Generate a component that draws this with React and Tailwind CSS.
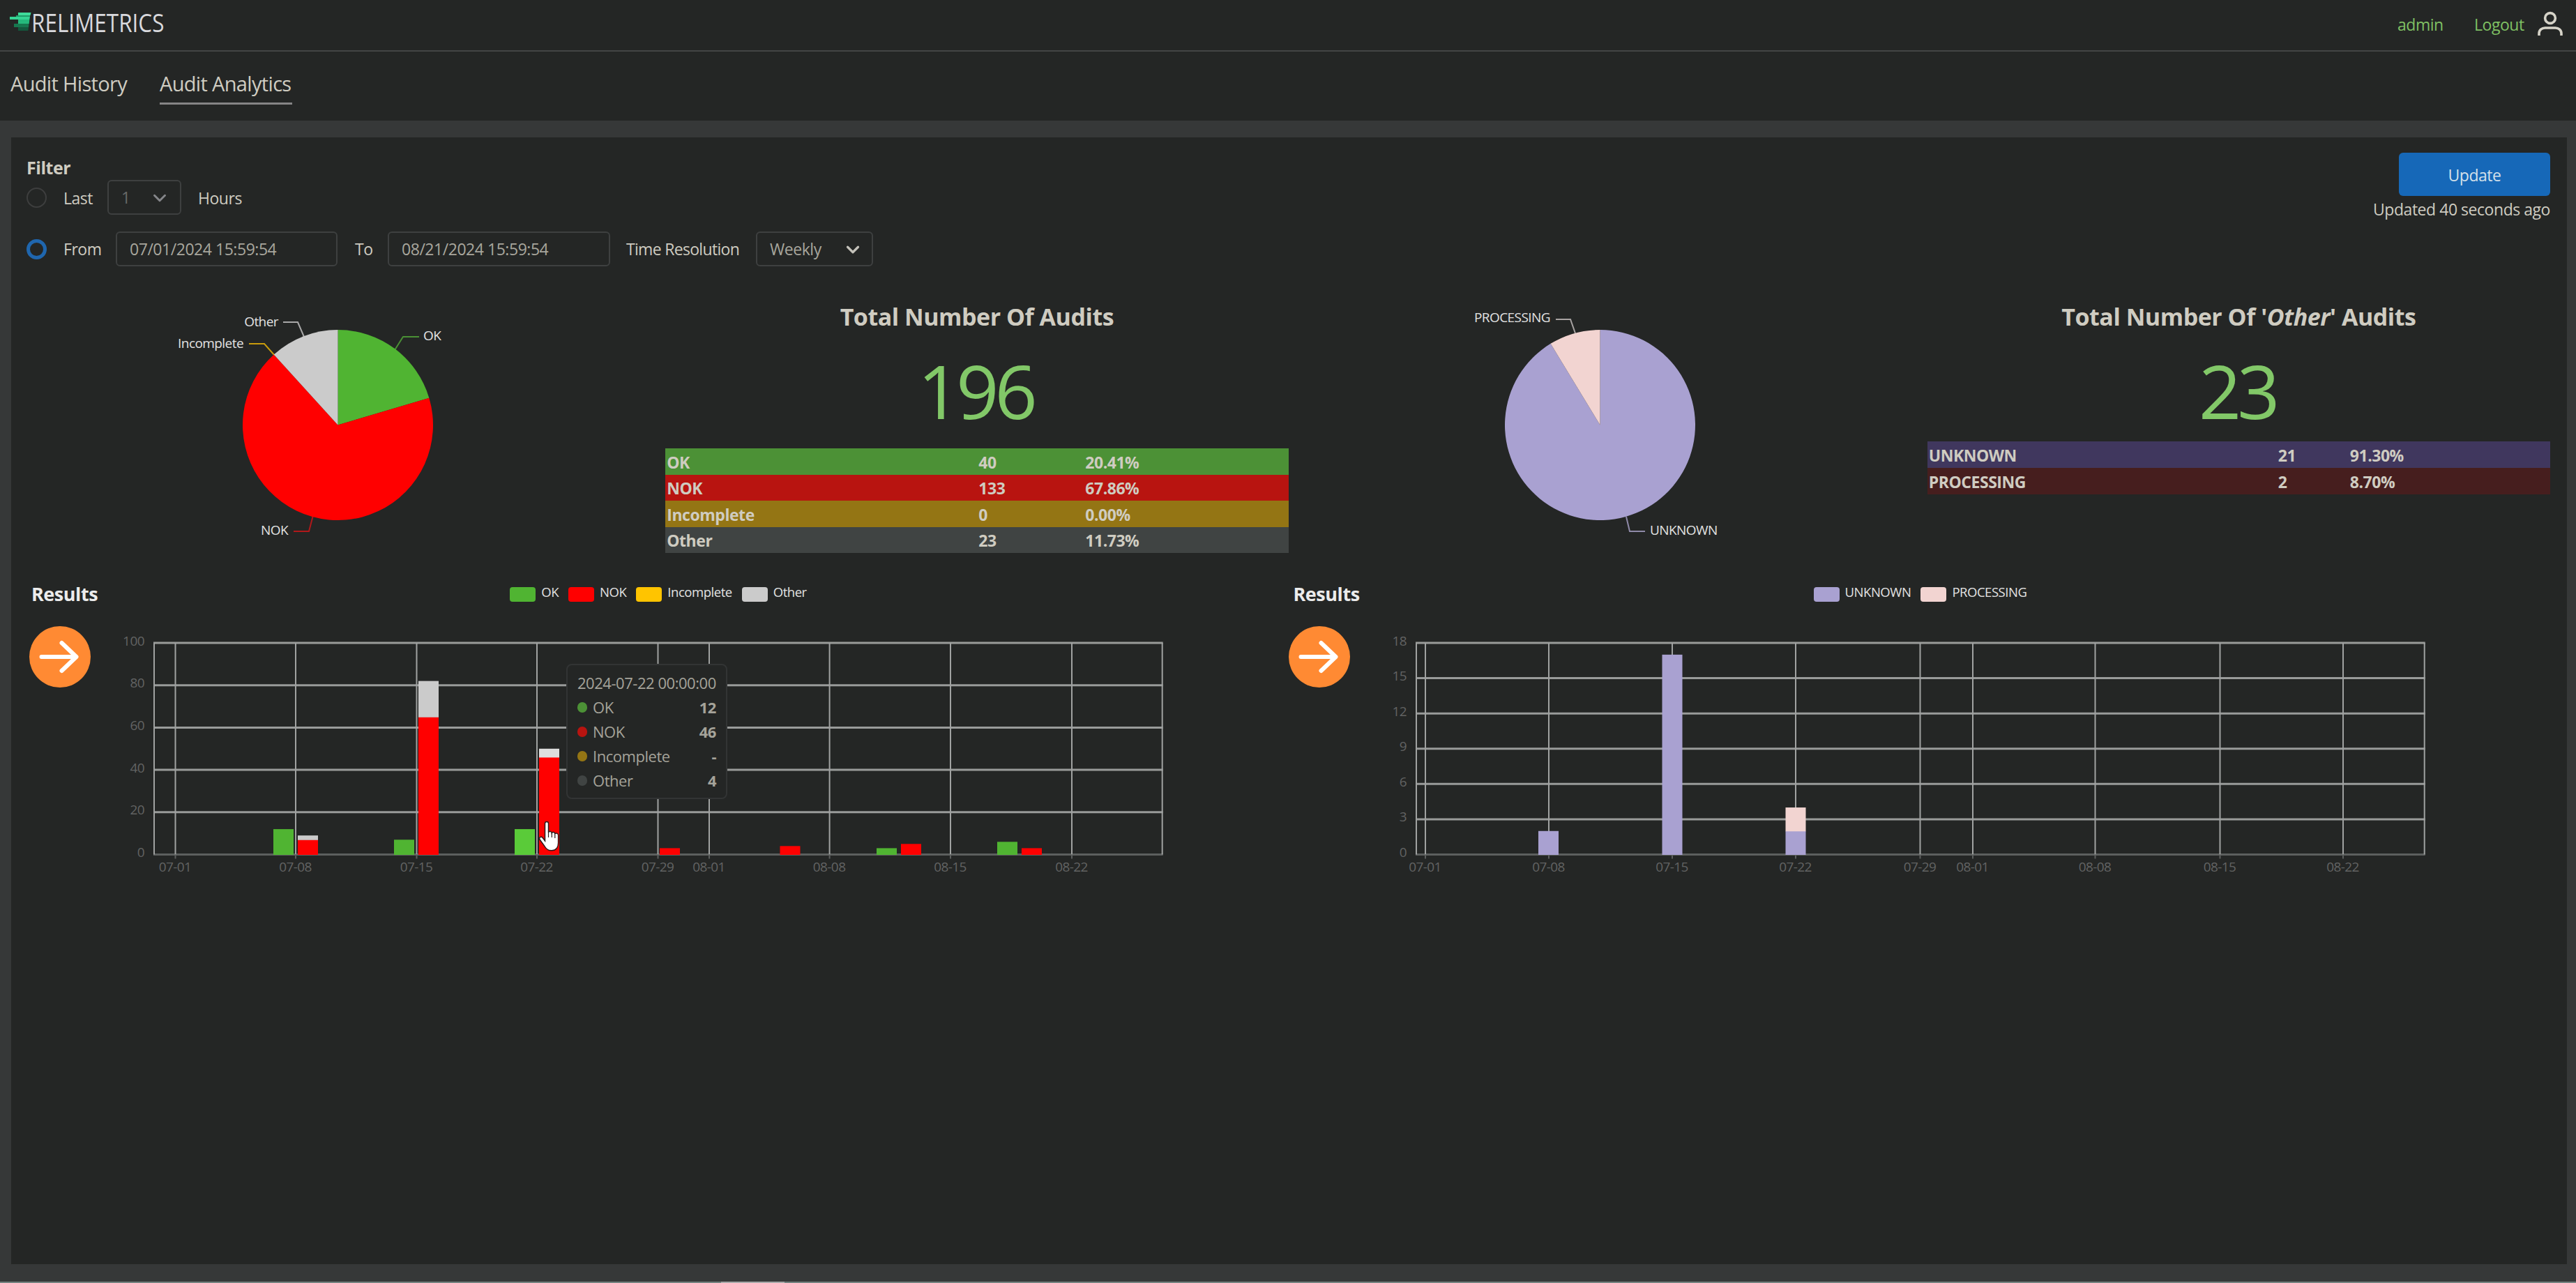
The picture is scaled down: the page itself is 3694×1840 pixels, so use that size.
import { ChevronDown } from 'lucide-react';

const auditPie = {
  slices: [
    { value: 40, color: '#50b432' },
    { value: 133, color: '#ff0000' },
    { value: 0, color: '#ffc400' },
    { value: 23, color: '#cbcbcb' },
  ],
  labels: [
    { text: 'OK', x: 569, y: 58, anchor: 'start', color: '#4a8f35', points: '528,72 540,53 563,53' },
    { text: 'Other', x: 361, y: 37.5, anchor: 'end', color: '#a8a8a8', points: '368,32 389,32 398,53' },
    { text: 'Incomplete', x: 311, y: 68.5, anchor: 'end', color: '#c99c0c', points: '319,63 341,63 356,80' },
    { text: 'NOK', x: 375, y: 337, anchor: 'end', color: '#b0181a', points: '383,332 405,332 411,309' },
  ],
};

const otherPie = {
  slices: [
    { value: 21, color: '#a9a1d1' },
    { value: 2, color: '#f2d4d1' },
  ],
  labels: [
    { text: 'PROCESSING', x: 375, y: 31.5, anchor: 'end', color: '#a8a3a2', points: '383,28 404,28 411,48' },
    { text: 'UNKNOWN', x: 518, y: 337, anchor: 'start', color: '#8f8aa8', points: '484,311 489,332 511,332' },
  ],
};

const auditRows = [
  { label: 'OK', count: 40, share: '20.41%', cls: 'h-[38px] bg-[#4c9136]' },
  { label: 'NOK', count: 133, share: '67.86%', cls: 'h-[37px] bg-[#b81410]' },
  { label: 'Incomplete', count: 0, share: '0.00%', cls: 'h-[38px] bg-[#947514]' },
  { label: 'Other', count: 23, share: '11.73%', cls: 'h-[37px] bg-[#404443]' },
];

const otherRows = [
  { label: 'UNKNOWN', count: 21, share: '91.30%', cls: 'h-[38px] bg-[#40375e]' },
  { label: 'PROCESSING', count: 2, share: '8.70%', cls: 'h-[38px] bg-[#461e1e]' },
];

const auditLegend = [
  { label: 'OK', cls: 'bg-[#50b432]' },
  { label: 'NOK', cls: 'bg-[#ff0000]' },
  { label: 'Incomplete', cls: 'bg-[#ffc400]' },
  { label: 'Other', cls: 'bg-[#cbcbcb]' },
];

const otherLegend = [
  { label: 'UNKNOWN', cls: 'bg-[#a9a1d1]' },
  { label: 'PROCESSING', cls: 'bg-[#f2d4d1]' },
];

// x is the left edge of the bar, stack goes bottom to top
const auditChart = {
  max: 100,
  step: 20,
  ticks: [
    ['07-01', 213.5], ['07-08', 386], ['07-15', 559.5], ['07-22', 732], ['07-29', 905.5],
    ['08-01', 979], ['08-08', 1151.6], ['08-15', 1325], ['08-22', 1499],
  ],
  bars: [
    { x: 354, stack: [[12, '#50b432']] },
    { x: 389, stack: [[7, '#ff0000'], [2, '#cbcbcb']] },
    { x: 527, stack: [[7, '#50b432']] },
    { x: 562, stack: [[65, '#ff0000'], [17, '#cbcbcb']] },
    { x: 700, stack: [[12, '#5acb39']] },
    { x: 735, stack: [[46, '#ff0000'], [4, '#dedede']] },
    { x: 908, stack: [[3, '#ff0000']] },
    { x: 1080.5, stack: [[4, '#ff0000']] },
    { x: 1219, stack: [[3, '#50b432']] },
    { x: 1254, stack: [[5, '#ff0000']] },
    { x: 1392, stack: [[6, '#50b432']] },
    { x: 1427, stack: [[3, '#ff0000']] },
  ],
};

const otherChart = {
  max: 18,
  step: 3,
  ticks: [
    ['07-01', 196], ['07-08', 373], ['07-15', 550], ['07-22', 727], ['07-29', 905.5],
    ['08-01', 981], ['08-08', 1156.5], ['08-15', 1335.5], ['08-22', 1512],
  ],
  bars: [
    { x: 358, stack: [[2, '#a9a1d1']] },
    { x: 535.5, stack: [[17, '#a9a1d1']] },
    { x: 712.5, stack: [[2, '#a9a1d1'], [2, '#f2d4d1']] },
  ],
};

const tooltipRows = [
  { label: 'OK', value: '12', cls: 'bg-[#4c9136]' },
  { label: 'NOK', value: '46', cls: 'bg-[#b81410]' },
  { label: 'Incomplete', value: '-', cls: 'bg-[#947514]' },
  { label: 'Other', value: '4', cls: 'bg-[#404443]' },
];

const Logo = () => (
  <div className="flex items-start">
    <svg width="31" height="46" viewBox="0 -14 31 46" className="shrink-0">
      <path d="M12 4h18.500l-1 4H12z" fill="#3fdc9b" />
      <path d="M0 10h29l-.7 4H0z" fill="#35d493" />
      <path d="M9 8h20.300l-.4 2H9z" fill="#1f9c69" />
      <path d="M12 14h16.300l-.6 6H12z" fill="#25b97c" />
      <path d="M6 20h21.500l-.5 5H6z" fill="#17774f" />
      <path d="M12 25h15l-.6 5H12z" fill="#13583d" />
    </svg>
    <span className="origin-left scale-x-[0.85] pt-1.5 text-[37px] leading-[52px] tracking-normal text-[#d9d9dd]">
      RELIMETRICS
    </span>
  </div>
);

const UserIcon = () => (
  <svg width="40" height="40" viewBox="0 0 40 40" fill="none" stroke="#d6d3c8" strokeWidth="3.6">
    <circle cx="20" cy="12" r="7.4" />
    <path d="M4 37v-3c0-5 4-8 8.500-8h15c4.500 0 8.500 3 8.500 8v3" />
  </svg>
);

const Header = () => (
  <header className="flex h-[74px] items-start justify-between border-b-2 border-[#434545] pl-3.5 pr-[17px]">
    <Logo />
    <div className="flex items-start pt-3.5 text-[#7fc063]">
      <span className="w-[110px] leading-[42px]">admin</span>
      <span className="w-[89px] leading-[42px]">Logout</span>
      <UserIcon />
    </div>
  </header>
);

const Tabs = () => (
  <nav className="flex h-[99px] items-start gap-[46px] pl-[15px] pt-6 text-[29px] leading-[44px] tracking-[-0.023em]">
    <a className="w-[168px] whitespace-nowrap">Audit History</a>
    <a className="w-[190px] whitespace-nowrap border-b-3 border-[#858585] pb-[5px]">Audit Analytics</a>
  </nav>
);

const Field = ({ className, children }) => (
  <div className={`flex h-[50px] items-center rounded-md border-2 border-[#3e4040] ${className}`}>
    {children}
  </div>
);

const Filter = () => (
  <div className="flex items-start justify-between">
    <div className="pt-[3px]">
      <h2 className="text-[25px] font-bold leading-[36px]">Filter</h2>
      <div className="flex items-center">
        <span className="mr-6 h-[29px] w-[29px] rounded-full border-2 border-[#3d3e3e]" />
        <span className="w-[63px] pt-0.5">Last</span>
        <Field className="w-[106px] justify-between pl-[18px] pr-3.5 pt-px text-[#6a6b69]">
          1
          <ChevronDown size={30} strokeWidth={2.4} color="#85868a" />
        </Field>
        <span className="ml-6 pt-0.5">Hours</span>
      </div>
      <div className="mt-6 flex items-center">
        <span className="mr-6 h-[29px] w-[29px] rounded-full border-[5px] border-[#1f66ae]" />
        <span className="w-[75px] pt-px">From</span>
        <Field className="w-[318px] pl-[18px] pt-px text-[#a8a69d]">07/01/2024 15:59:54</Field>
        <span className="ml-[25px] w-[47px] pt-px">To</span>
        <Field className="w-[319px] pl-[18px] pt-px text-[#a8a69d]">08/21/2024 15:59:54</Field>
        <span className="ml-[23px] w-[186px] pt-px tracking-[-0.03em]">Time Resolution</span>
        <Field className="w-[168px] justify-between pl-[18px] pr-3 pt-px text-[#a8a69d]">
          Weekly
          <ChevronDown size={30} strokeWidth={2.6} color="#c4c2ba" />
        </Field>
      </div>
    </div>
    <div className="flex flex-col items-end">
      <button type="button" className="h-[62px] w-[217px] rounded-md bg-[#1668b8] pt-0.5 text-[#d3e0ea]">
        Update
      </button>
      <p className="mt-0.5 leading-[34px]">Updated 40 seconds ago</p>
    </div>
  </div>
);

const R = 136.5;
const CX = 446.5;
const CY = 179.5;

const Pie = ({ slices, labels }) => {
  const total = slices.reduce((sum, s) => sum + s.value, 0);
  let start = 0;
  const paths = slices.map((s) => {
    const end = start + (s.value / total) * Math.PI * 2;
    const large = end - start > Math.PI ? 1 : 0;
    const d = `M${CX} ${CY}L${CX + R * Math.sin(start)} ${CY - R * Math.cos(start)}A${R} ${R} 0 ${large} 1 ${CX + R * Math.sin(end)} ${CY - R * Math.cos(end)}Z`;
    start = end;
    return { d, color: s.color };
  });

  return (
    <svg width="893" height="400" viewBox="0 0 893 400">
      {labels.map((l) => (
        <polyline key={l.text} points={l.points} fill="none" stroke={l.color} strokeWidth="2" />
      ))}
      {paths.map((p) => (
        <path key={p.color} d={p.d} fill={p.color} />
      ))}
      {labels.map((l) => (
        <text
          key={l.text}
          x={l.x}
          y={l.y}
          textAnchor={l.anchor}
          className="fill-[#e2e2e2] text-[19px] font-medium tracking-[-0.03em]"
        >
          {l.text}
        </text>
      ))}
    </svg>
  );
};

const Totals = ({ title, total, rows, tableCls, rowCls }) => (
  <div className="pt-0.5">
    <h3 className="text-center text-[34px] font-bold leading-[44px] tracking-[-0.014em]">{title}</h3>
    <p className="mt-6 pr-1 text-center text-[107px] leading-[120px] tracking-[-0.055em] text-[#82c868]">{total}</p>
    <div className={tableCls}>
      {rows.map((r) => (
        <div key={r.label} className={`grid items-center pl-0.5 pt-px font-bold leading-[34px] tracking-[-0.02em] ${rowCls} ${r.cls}`}>
          <span>{r.label}</span>
          <span>{r.count}</span>
          <span>{r.share}</span>
        </div>
      ))}
    </div>
  </div>
);

const LEFT = 183;
const RIGHT = 1628.7;
const TOP = 50;
const BASE = 353.5;

const BarChart = ({ max, step, ticks, bars }) => {
  const unit = (BASE - TOP) / max;
  const levels = [];
  for (let v = 0; v <= max; v += step) levels.push(v);

  return (
    <svg width="1809" height="400" viewBox="0 0 1809 400">
      {levels.map((v) => (
        <g key={v}>
          <line
            x1={LEFT - 1}
            x2={RIGHT + 1}
            y1={BASE - v * unit}
            y2={BASE - v * unit}
            stroke={v === 0 ? '#5c5f5e' : '#999b9a'}
            strokeWidth="3"
          />
          <text
            x="169"
            y={BASE - v * unit + 3.5}
            textAnchor="end"
            className="fill-[#626363] text-[19px] tracking-[-0.03em]"
          >
            {v}
          </text>
        </g>
      ))}
      <line x1={LEFT} x2={LEFT} y1={TOP} y2={BASE} stroke="#a0a2a1" strokeWidth="2" />
      <line x1={RIGHT} x2={RIGHT} y1={TOP} y2={BASE} stroke="#a0a2a1" strokeWidth="2" />
      {ticks.map(([label, x]) => (
        <g key={label}>
          <line x1={x} x2={x} y1={TOP} y2={BASE} stroke="#a0a2a1" strokeWidth="2" />
          <line x1={x} x2={x} y1={BASE} y2={BASE + 6} stroke="#5c5f5e" strokeWidth="2" />
          <text x={x - 0.5} y="378" textAnchor="middle" className="fill-[#626363] text-[19px] tracking-[-0.03em]">
            {label}
          </text>
        </g>
      ))}
      {bars.map((b) => {
        let y = BASE;
        return b.stack.map(([value, color]) => {
          y -= value * unit;
          return <rect key={`${b.x}-${color}`} x={b.x} y={y} width="29" height={value * unit + 0.5} fill={color} />;
        });
      })}
    </svg>
  );
};

const Results = ({ legend, chart, badgeCls, children }) => (
  <div className="relative pt-0.5">
    <div className="grid h-10 grid-cols-[183px_1446px_180px] items-center">
      <h3 className="pl-[7px] text-[27px] font-bold text-[#ececec]">Results</h3>
      <div className="flex justify-center gap-3.5">
        {legend.map((l) => (
          <div key={l.label} className="flex items-center gap-2">
            <span className={`h-[21px] w-[37px] rounded-[4px] ${l.cls}`} />
            <span className="-mt-1.5 text-[18.5px] font-medium leading-[26px] tracking-[-0.025em] text-[#e2e2e2]">
              {l.label}
            </span>
          </div>
        ))}
      </div>
    </div>
    <BarChart {...chart} />
    <span className={`absolute top-[68px] h-[88px] w-[88px] rounded-full bg-[#ff8a33] ${badgeCls}`}>
      <svg viewBox="0 0 88 88" fill="none" stroke="#fff" strokeWidth="6" strokeLinecap="round" strokeLinejoin="round">
        <path d="M17.500 44H67M46.500 24L67.500 44L46.500 64" />
      </svg>
    </span>
    {children}
  </div>
);

const Tooltip = () => (
  <div className="absolute left-[774px] top-[122px] h-[194px] w-[231px] rounded-lg border-2 border-[#323434] bg-[#242625] px-3.5 pt-2 text-[22px] text-[#a5a39a]">
    <p className="leading-[35px]">2024-07-22 00:00:00</p>
    {tooltipRows.map((r) => (
      <div key={r.label} className="flex items-center leading-[35px]">
        <span className={`mr-2 h-[15px] w-[14px] rounded-full ${r.cls}`} />
        <span className="flex-1">{r.label}</span>
        <span className="font-bold">{r.value}</span>
      </div>
    ))}
  </div>
);

const HandCursor = () => (
  <svg className="absolute left-[734px] top-[347px]" width="32" height="45" viewBox="0 0 32 45">
    <path
      d="M9.500 4c0-3.500 5-3.500 5 0v13c1-2.500 4.600-2 4.800.6 1.200-1.800 4.300-1.400 4.500 1.200 1.400-1.500 4.600-.9 4.800 2v11c0 6-3 11-9.500 11-6 0-8.500-3-11-7.500L2 27c-1.500-3 2-5 4.200-2.500L9.500 29z"
      fill="#fff"
      stroke="#2a1a1a"
      strokeWidth="1.500"
    />
    <path d="M14.500 17v7M19.300 18v6M23.800 19.500V25" stroke="#2a1a1a" strokeWidth="1.200" />
  </svg>
);

export default function App() {
  return (
    <div className="flex h-[1840px] w-[3694px] flex-col overflow-hidden bg-[#363838] font-['Open_Sans',sans-serif] text-[23px] tracking-[-0.02em] text-[#cfccc1]">
      <div className="bg-[#242625]">
        <Header />
        <Tabs />
      </div>
      <main className="ml-4 mr-[13px] mt-6 h-[1616px] bg-[#242625] pl-[22px] pr-6 pt-[22px]">
        <Filter />
        <div className="mt-12 grid grid-cols-2">
          <section>
            <div className="grid h-[400px] grid-cols-2 gap-[23px]">
              <Pie {...auditPie} />
              <Totals
                title="Total Number Of Audits"
                total="196"
                rows={auditRows}
                tableCls="mt-[23px]"
                rowCls="grid-cols-[447px_153px_1fr]"
              />
            </div>
            <Results legend={auditLegend} chart={auditChart} badgeCls="left-1">
              <Tooltip />
              <HandCursor />
            </Results>
          </section>
          <section>
            <div className="grid h-[400px] grid-cols-2 gap-[23px]">
              <Pie {...otherPie} />
              <Totals
                title={<>Total Number Of '<i>Other</i>' Audits</>}
                total="23"
                rows={otherRows}
                tableCls="mt-[13px]"
                rowCls="grid-cols-[501px_103px_1fr]"
              />
            </div>
            <Results legend={otherLegend} chart={otherChart} badgeCls="left-0" />
          </section>
        </div>
      </main>
      <div className="mt-auto flex h-0.5 bg-[#74827f]">
        <span className="ml-[1034px] w-[91px] bg-[#a9a9a9]" />
      </div>
    </div>
  );
}
